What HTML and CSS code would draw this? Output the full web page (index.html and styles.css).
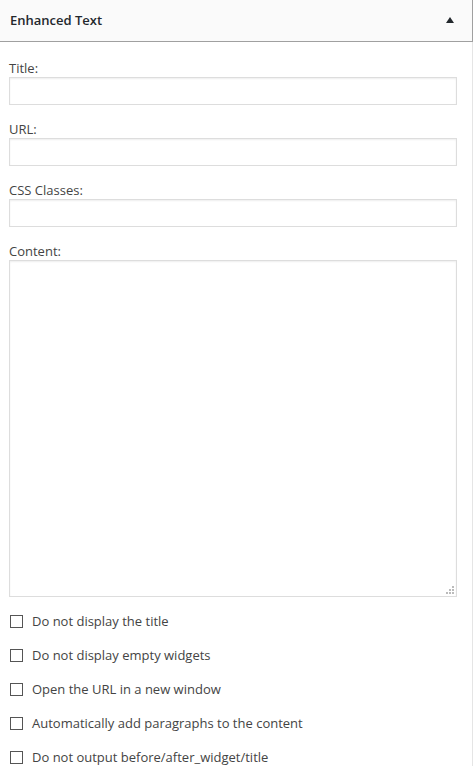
FILE: index.html
```html
<!DOCTYPE html>
<html lang="en">

<head>
  <meta charset="UTF-8">
  <meta name="viewport" content="width=device-width, initial-scale=1.0">
  <title>Enhanced Text</title>
  <link rel="stylesheet" href="styles.css">
</head>

<body>
  <!-- widget box -->
  <div class="widget">
    <div class="widget-top">
      <h3 class="widget-title">Enhanced Text</h3>
      <span class="widget-toggle"></span>
    </div>

    <div class="widget-inside">
      <p class="field">
        <label for="title">Title:</label>
        <input type="text" id="title" class="widefat">
      </p>
      <p class="field">
        <label for="url">URL:</label>
        <input type="text" id="url" class="widefat">
      </p>
      <p class="field">
        <label for="classes">CSS Classes:</label>
        <input type="text" id="classes" class="widefat">
      </p>
      <p class="field">
        <label for="content">Content:</label>
        <span class="textarea-wrap">
          <textarea id="content" class="widefat"></textarea>
          <span class="grip"></span>
        </span>
      </p>

      <!-- options -->
      <div class="options">
        <label class="check"><input type="checkbox"> Do not display the title</label>
        <label class="check"><input type="checkbox"> Do not display empty widgets</label>
        <label class="check"><input type="checkbox"> Open the URL in a new window</label>
        <label class="check"><input type="checkbox"> Automatically add paragraphs to the content</label>
        <label class="check"><input type="checkbox"> Do not output before/after_widget/title</label>
      </div>
    </div>
  </div>
</body>

</html>
```

FILE: styles.css
```css
/* page */
body {
  margin: 0;
  background-color: #fff;
  font-family: "Open Sans", "Noto Sans", sans-serif;
  font-size: 13px;
  line-height: 18px;
  color: #444;
}

/* widget box */
.widget {
  width: 472px;
  border-right: 1px solid #e5e5e5;
  background-color: #fff;
}

.widget-top {
  display: flex;
  align-items: center;
  justify-content: space-between;
  height: 41px;
  padding: 0 18px 0 10px;
  background-color: #fafafa;
  border-bottom: 1px solid #a0a0a0;
  border-right: 1px solid #a0a0a0;
  margin-right: -1px;
}

.widget-title {
  margin: 0 0 1px;
  font-size: 13px;
  font-weight: 600;
  color: #23282d;
}

.widget-toggle {
  width: 0;
  height: 0;
  margin-bottom: 2px;
  border-left: 4px solid transparent;
  border-right: 4px solid transparent;
  border-bottom: 6px solid #23282d;
}

/* form */
.widget-inside {
  padding: 17px 16px 0 9px;
}

.field {
  margin: 0 0 15px;
}

.field label {
  display: block;
}

.widefat {
  display: block;
  box-sizing: border-box;
  width: 448px;
  height: 28px;
  margin: 0;
  padding: 3px 5px;
  border: 1px solid #ddd;
  box-shadow: inset 0 1px 2px rgba(0, 0, 0, 0.07);
  background-color: #fff;
  font: inherit;
  color: #32373c;
  outline: none;
}

.textarea-wrap {
  display: block;
  position: relative;
  width: 448px;
}

textarea.widefat {
  height: 337px;
  resize: none;
}

/* resize grip dots */
.grip {
  position: absolute;
  right: 3px;
  bottom: 3px;
  width: 8px;
  height: 8px;
  background:
    linear-gradient(#bbb, #bbb) 6px 0 / 2px 2px no-repeat,
    linear-gradient(#bbb, #bbb) 3px 3px / 2px 2px no-repeat,
    linear-gradient(#bbb, #bbb) 6px 3px / 2px 2px no-repeat,
    linear-gradient(#bbb, #bbb) 0 6px / 2px 2px no-repeat,
    linear-gradient(#bbb, #bbb) 3px 6px / 2px 2px no-repeat,
    linear-gradient(#bbb, #bbb) 6px 6px / 2px 2px no-repeat;
}

/* checkboxes */
.options {
  display: flex;
  flex-direction: column;
  gap: 16px;
  padding: 0 0 0 1px;
}

.check {
  display: flex;
  align-items: center;
  gap: 9px;
}

.check input {
  appearance: none;
  box-sizing: border-box;
  width: 13px;
  height: 13px;
  margin: 0;
  border: 1px solid #555;
  background-color: #fff;
}
```
